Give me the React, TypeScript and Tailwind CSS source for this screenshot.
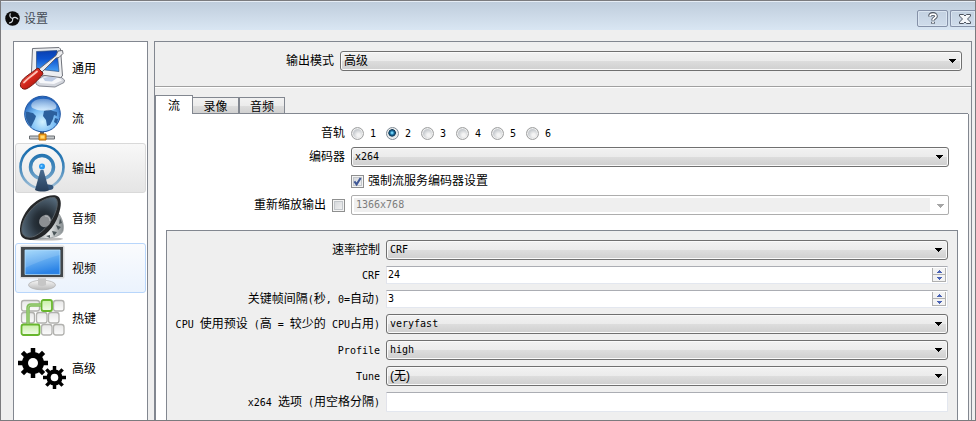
import React, { useState } from 'react';
import type { ReactNode } from 'react';

const CJK = "font-['Liberation_Sans','Noto_Sans_CJK_SC',sans-serif]";
const MONO = "font-['DejaVu_Sans_Mono','Noto_Sans_CJK_SC',monospace]";

/* Latin runs are set in a half-width face so they line up with the 12px Han glyphs. */
function Mixed({ text }: { text: string }) {
  const runs = text.match(/[\x20-\x7e]+|[^\x20-\x7e]+/g) ?? [];
  return (
    <>
      {runs.map((run, i) =>
        /^[\x20-\x7e]/.test(run) ? (
          <span key={i} className={`${MONO} text-[10px] whitespace-pre`}>{run}</span>
        ) : (
          <span key={i}>{run}</span>
        ),
      )}
    </>
  );
}

function Label({ htmlFor, children }: { htmlFor: string; children: string }) {
  return (
    <label htmlFor={htmlFor} className="h-[18px] justify-self-end whitespace-nowrap leading-[18px]">
      <Mixed text={children} />
    </label>
  );
}

function Combo({ id, value, han }: { id: string; value: string; han?: boolean }) {
  return (
    <div className="relative h-5">
      <select
        id={id}
        defaultValue={value}
        className={`block h-5 w-full appearance-none rounded-[3px] border border-[#707070] bg-[linear-gradient(#f2f2f2,#ebebeb_50%,#dddddd_50%,#cfcfcf)] pl-[3px] leading-[18px] text-black shadow-[inset_0_0_0_1px_#fafafa] outline-none ${han ? 'text-[12px]' : `${MONO} text-[10px]`}`}
      >
        <option>{value}</option>
      </select>
      <svg className="pointer-events-none absolute top-2 right-[6px]" width="7" height="4" viewBox="0 0 7 4" shapeRendering="crispEdges">
        <path d="M0 0h7v1H0zM1 1h5v1H1zM2 2h3v1H2zM3 3h1v1H3z" />
      </svg>
    </div>
  );
}

function DisabledCombo({ id, value }: { id: string; value: string }) {
  return (
    <div className="relative h-5 rounded-[2px] border border-[#adadad] bg-white py-[2px] pr-[18px] pl-[2px]">
      <select
        id={id}
        disabled
        defaultValue={value}
        className={`${MONO} block h-[14px] w-full appearance-none bg-[#efefef] pl-[2px] text-[10px] leading-[14px] text-[#7c7c7c] opacity-100`}
      >
        <option>{value}</option>
      </select>
      <svg className="pointer-events-none absolute top-2 right-1" width="7" height="4" viewBox="0 0 7 4" shapeRendering="crispEdges">
        <path fill="#a6a6a6" d="M0 0h7v1H0zM1 1h5v1H1zM2 2h3v1H2zM3 3h1v1H3z" />
      </svg>
    </div>
  );
}

const FIELD = 'border border-[#e3e7ef] border-t-[#abadb3] border-l-[#e2e3ea] bg-white';

function Spin({ id, initial }: { id: string; initial: number }) {
  const [value, setValue] = useState(initial);
  const step = 'flex w-full flex-1 items-center justify-center bg-[#f3f3f3]';
  return (
    <div className={`flex h-[18px] ${FIELD}`}>
      <input
        id={id}
        type="number"
        value={value}
        onChange={(e) => setValue(Number(e.target.value))}
        className={`${MONO} min-w-0 flex-1 [appearance:textfield] bg-transparent pl-px text-[10px] leading-4 outline-none [&::-webkit-inner-spin-button]:appearance-none`}
      />
      <div className="my-px mr-px flex w-[14px] flex-col border border-t-0 border-[#b0b0b0]">
        <button type="button" aria-label="+" onClick={() => setValue(value + 1)} className={`${step} border-b border-[#b0b0b0]`}>
          <svg width="5" height="3" viewBox="0 0 5 3" shapeRendering="crispEdges"><path fill="#4a63b5" d="M2 0h1v1H2zM1 1h3v1H1zM0 2h5v1H0z" /></svg>
        </button>
        <button type="button" aria-label="-" onClick={() => setValue(value - 1)} className={step}>
          <svg width="5" height="3" viewBox="0 0 5 3" shapeRendering="crispEdges"><path fill="#4a63b5" d="M0 0h5v1H0zM1 1h3v1H1zM2 2h1v1H2z" /></svg>
        </button>
      </div>
    </div>
  );
}

function Tick({ id, on }: { id: string; on?: boolean }) {
  return (
    <span className="relative block size-[13px] shrink-0">
      <input
        id={id}
        type="checkbox"
        defaultChecked={on}
        className="peer block size-[13px] appearance-none border border-[#8e8f8f] bg-[linear-gradient(135deg,#cfd2d6,#f6f6f6)] shadow-[inset_0_0_0_1px_#f4f4f4,inset_0_0_0_2px_#c3c7cb]"
      />
      <svg className="pointer-events-none absolute inset-0 hidden peer-checked:block" width="13" height="13" viewBox="0 0 13 13">
        <path d="M3.4 6.4 5.6 9.4 9.6 3" fill="none" stroke="#3f5795" strokeWidth="2" />
      </svg>
    </span>
  );
}

/* ---------- sidebar icons, 48px each ---------- */

function GeneralIcon() {
  return (
    <svg width="48" height="48" viewBox="0 0 48 48">
      <defs>
        <linearGradient id="gs" x1="0" y1="0" x2="0" y2="1"><stop offset="0" stopColor="#0b3fae" /><stop offset=".4" stopColor="#0c53cf" /><stop offset="1" stopColor="#45a0f5" /></linearGradient>
        <linearGradient id="gh" x1="0" y1="0" x2="1" y2="1"><stop offset="0" stopColor="#ee7467" /><stop offset=".5" stopColor="#d3261b" /><stop offset="1" stopColor="#8d120c" /></linearGradient>
      </defs>
      <path d="M18 36 27 31l14 .5 5.500 4.500-.5 2.500-9 4.500-16-1-3-2z" fill="#d4d7de" stroke="#888c96" />
      <path d="M20 36 28 32.500l12 .5 4 3.500-8 3.500-14-1z" fill="#f6f7fa" />
      <path d="m25 34 7-1.500 7 1.500-5 3.500-7-.5z" fill="#bccbe4" />
      <path d="M14.500 4.500 41 3.500l1.500 1.500 2 27-2 1.500-27-3.500-2-2z" fill="#eceef1" stroke="#70737b" />
      <path d="M18.500 7.500 39 6.500l2 21-22.500-2.500z" fill="url(#gs)" stroke="#31517f" strokeWidth=".7" />
      <path d="m21 25 17-13.500 2-4.500 4.500-.5.5 3-4 4-3 .5L24 28z" fill="#ececee" stroke="#5c5f66" strokeWidth=".9" />
      <path d="M3.500 37.500C6 33 13 29.500 19 24.500l1-.5 5 5-.5 1.500C20 36 14 42.500 8 45c-4 1-7.500-3-4.500-7.500z" fill="url(#gh)" stroke="#74140e" />
      <path d="M6 38.500c3-4 8-6.500 13-11" stroke="#ffc1b5" strokeWidth="1.800" fill="none" strokeLinecap="round" />
    </svg>
  );
}

function StreamIcon() {
  return (
    <svg width="48" height="48" viewBox="0 0 48 48">
      <defs>
        <radialGradient id="sg" cx=".5" cy=".72" r=".65"><stop offset="0" stopColor="#d2f1ff" /><stop offset=".55" stopColor="#78bcf5" /><stop offset="1" stopColor="#2465bd" /></radialGradient>
        <linearGradient id="st" x1="0" y1="0" x2="0" y2="1"><stop offset="0" stopColor="#fff" stopOpacity=".3" /><stop offset="1" stopColor="#fff" stopOpacity=".65" /></linearGradient>
      </defs>
      <path d="M24 37v6" stroke="#5b6066" strokeWidth="4" />
      <path d="M11.500 42h25v3h-25z" fill="#c5c8cb" stroke="#6a6e72" />
      <circle cx="24.500" cy="20" r="17.800" fill="url(#sg)" stroke="#1e55a3" />
      <path d="M8 18c2-1 5 1 7 1l3 3-1 3-2 4-2 4c-3-3-4-6-5-9zM26 17c3-2 6-2 9 0l4 1v4l-3-1-1 4-3 6-3 1-1-6-3-4zM37 24l3 1-1 5-3-2z" fill="#2b5f9d" />
      <path d="M15 8c4-4 15-4 19-1 4 2 6 6 3 8-6 2-16 2-20 0-4-1-5-4-2-7z" fill="url(#st)" />
      <path d="M21 40h7v6h-7z" fill="#f9a21b" stroke="#b66b06" />
      <path d="M22.500 41.500h4v3h-4z" fill="#ffdc73" />
    </svg>
  );
}

function OutputIcon() {
  return (
    <svg width="48" height="48" viewBox="0 0 48 48">
      <defs>
        <linearGradient id="og" gradientUnits="userSpaceOnUse" x1="0" y1="2" x2="0" y2="46"><stop offset="0" stopColor="#1068ac" /><stop offset=".5" stopColor="#4488bb" /><stop offset="1" stopColor="#a8c4da" /></linearGradient>
        <linearGradient id="oc" x1="0" y1="0" x2="0" y2="1"><stop offset="0" stopColor="#4a6d91" /><stop offset="1" stopColor="#263d59" /></linearGradient>
      </defs>
      <circle cx="24" cy="23" r="21.500" fill="none" stroke="url(#og)" strokeWidth="2.600" />
      <circle cx="24" cy="23" r="11.500" fill="none" stroke="url(#og)" strokeWidth="3.500" />
      <path d="m27 40 7 1c3 2 1 5-2 5l-6 1z" fill="#33547a" />
      <path d="M22.500 26h3L31 46c-3 2-10 2-14 0z" fill="url(#oc)" />
      <circle cx="24" cy="22.500" r="3" fill="#2a9af0" />
      <circle cx="23.500" cy="22" r="1" fill="#8bd0ff" />
    </svg>
  );
}

function AudioIcon() {
  return (
    <svg width="48" height="48" viewBox="0 0 48 48">
      <defs>
        <radialGradient id="ag" cx=".62" cy=".62" r=".7"><stop offset="0" stopColor="#181d22" /><stop offset=".4" stopColor="#28323b" /><stop offset="1" stopColor="#5a7082" /></radialGradient>
        <linearGradient id="ab" x1="0" y1="0" x2="1" y2="0"><stop offset="0" stopColor="#60686b" /><stop offset=".5" stopColor="#eef0f0" /><stop offset="1" stopColor="#868d90" /></linearGradient>
      </defs>
      <ellipse cx="28" cy="45" rx="17" ry="1.600" fill="#bcbcbc" />
      <path d="M41 20c4 6 5 12 4 17-2 6-14 8-30 8z" fill="url(#ab)" stroke="#8b9194" strokeWidth=".7" />
      <path d="m38 31 5 2-3 3zM34 37l5 1-3 4zM42 24l2 5-3 1zM28 42l4-1v3z" fill="#4b5559" />
      <path d="M38 1.500c5 1 6 8 3.500 16C39 28 31 41 19 45 12 47 4 46 2.500 40 1 33 3 24 10 15 17 6 30 0 38 1.500z" fill="#242628" />
      <path d="M36 3.500c4 .5 4 7 2 13C35 26 27 37 17 42 11 44.500 5 43 4 38c-1-6 2-14 8-21C18 9 30 2.500 36 3.500z" fill="url(#ag)" stroke="#575f65" />
      <ellipse cx="27" cy="27" rx="5.500" ry="6.500" transform="rotate(38 27 27)" fill="#8c8f92" />
      <path d="M27 22c3 0 5 2 5 5" stroke="#b7babd" fill="none" />
    </svg>
  );
}

function VideoIcon() {
  return (
    <svg width="48" height="48" viewBox="0 0 48 48">
      <defs>
        <linearGradient id="vg" x1="0" y1="0" x2=".3" y2="1"><stop offset="0" stopColor="#9bd5fb" /><stop offset="1" stopColor="#2b83e6" /></linearGradient>
        <linearGradient id="vb" x1="0" y1="0" x2="0" y2="1"><stop offset="0" stopColor="#f7f7f7" /><stop offset="1" stopColor="#b9b9b9" /></linearGradient>
      </defs>
      <ellipse cx="24" cy="41" rx="13.500" ry="4.800" fill="url(#vb)" stroke="#b4b4b4" strokeWidth=".8" />
      <path d="M20 33h8v8c-2 1.500-6 1.500-8 0z" fill="#c6c6c6" />
      <rect x="2" y="1.500" width="44.500" height="33" rx="1.500" fill="#d9dadb" />
      <rect x="3" y="3" width="42" height="30" fill="#42474b" />
      <path d="M7 6h35v24.500H7z" fill="url(#vg)" stroke="#a9dbff" strokeWidth=".8" />
      <path d="M7 6h35v5C29 14 15 20 7 24z" fill="#fff" opacity=".12" />
    </svg>
  );
}

function HotkeyIcon() {
  const keys = [
    [3.5, 6.5, 18], [35.5, 6.5, 10.5],
    [3.5, 18.5, 13], [18.5, 18.5, 10.5], [30.5, 18.5, 10.5],
    [23.5, 30.5, 10.5], [35.5, 30.5, 10.5],
  ];
  return (
    <svg width="48" height="48" viewBox="0 0 48 48">
      <defs>
        <linearGradient id="kg" x1="0" y1="0" x2="0" y2="1"><stop offset="0" stopColor="#e7e7e7" /><stop offset="1" stopColor="#fcfcfc" /></linearGradient>
        <linearGradient id="kn" x1="0" y1="0" x2="0" y2="1"><stop offset="0" stopColor="#c7efa6" /><stop offset="1" stopColor="#f3fcea" /></linearGradient>
      </defs>
      {keys.map(([x, y, w]) => (
        <rect key={`${x}-${y}`} x={x} y={y} width={w} height="10.500" rx="2.500" fill="url(#kg)" stroke="#b1b1ae" strokeWidth="1.300" />
      ))}
      <rect x="3.500" y="30.500" width="18" height="10.500" rx="2" fill="url(#kn)" stroke="#68b62e" strokeWidth="1.800" />
      <rect x="23.500" y="6" width="10.500" height="11" rx="2" fill="url(#kn)" stroke="#68b62e" strokeWidth="1.800" />
      <path d="M10 30V14q0-3 3-3h10" fill="none" stroke="#82be5b" strokeWidth="3.500" />
      <path d="M10 30V14q0-3 3-3h10" fill="none" stroke="#a5d486" strokeWidth="1" />
    </svg>
  );
}

function Gear({ cx, cy, r, body, hole, tooth }: { cx: number; cy: number; r: number; body: number; hole: number; tooth: number }) {
  return (
    <g transform={`translate(${cx} ${cy})`}>
      {[0, 45, 90, 135].map((a) => (
        <rect key={a} x={-tooth / 2} y={-r} width={tooth} height={r * 2} transform={`rotate(${a})`} />
      ))}
      <circle r={body} />
      <circle r={hole} fill="#fff" />
    </g>
  );
}

function AdvancedIcon() {
  return (
    <svg width="48" height="48" viewBox="0 0 48 48">
      <Gear cx={15} cy={19} r={15} body={11} hole={5} tooth={4.5} />
      <Gear cx={36.5} cy={33.5} r={11.5} body={8} hole={3.8} tooth={3.5} />
    </svg>
  );
}

const NAV: { name: string; icon: ReactNode; look: string }[] = [
  { name: '通用', icon: <GeneralIcon />, look: 'border-transparent' },
  { name: '流', icon: <StreamIcon />, look: 'border-transparent' },
  { name: '输出', icon: <OutputIcon />, look: 'border-[#d9d9d9] bg-linear-to-b from-[#f8f8f8] to-[#e5e5e5]' },
  { name: '音频', icon: <AudioIcon />, look: 'border-transparent' },
  { name: '视频', icon: <VideoIcon />, look: 'border-[#b8d6fb] bg-linear-to-b from-[#fafbfd] to-[#ebf3fd]' },
  { name: '热键', icon: <HotkeyIcon />, look: 'border-transparent' },
  { name: '高级', icon: <AdvancedIcon />, look: 'border-transparent' },
];

function TitleBar() {
  const btn = 'flex h-[17px] items-center justify-center border border-[#8591a8] bg-linear-to-b from-[#c3d1e1] to-[#cfdceb] shadow-[inset_0_0_0_1px_#dae5f1]';
  return (
    <header className="flex h-[29px] shrink-0 items-center border-t border-[#e6edf5] bg-linear-to-b from-[#bfcddc] to-[#d9e6f3] pt-[5px] pl-1">
      <svg width="15" height="15" viewBox="0 0 30 30" aria-hidden="true">
        <circle cx="15" cy="15" r="14.500" fill="#0b0b0b" />
        {[0, 120, 240].map((a) => (
          <path key={a} d="M10.500 5.500C8.500 10 10.500 14 15 15" fill="none" stroke="#d4dae0" strokeWidth="2.400" strokeLinecap="round" transform={`rotate(${a} 15 15)`} />
        ))}
      </svg>
      <h1 className="ml-1 flex-1 text-[12px] leading-4 text-[#454c55]">设置</h1>
      <button type="button" aria-label="帮助" className={`${btn} mr-[2px] w-[31px] rounded-[2px]`}>
        <svg width="10" height="13" viewBox="0 0 10 13">
          <path d="M2 4.500C2 1 8 1 8 4.200 8 6.200 5 6 5 8.500M5 9.700v2" fill="none" stroke="#4e5561" strokeWidth="3.600" />
          <path d="M2 4.200C2 1.300 8 1.300 8 4.200 8 6.200 5 6 5 8.200M5 9.700v1.500" fill="none" stroke="#fff" strokeWidth="1.700" />
        </svg>
      </button>
      <button type="button" aria-label="关闭" className={`${btn} w-[25px] rounded-l-[2px] border-r-0 pl-1`}>
        <svg width="12" height="10" viewBox="0 0 12 10">
          <path d="M.5.5h4L6 2 7.500.5h4v1.500L8.500 5l3 3v1.500h-4L6 8 4.500 9.500h-4V8l3-3-3-3z" fill="#f5f7fa" stroke="#4e5561" />
        </svg>
      </button>
    </header>
  );
}

function Sidebar() {
  return (
    <nav className="w-[135px] shrink-0 border border-b-0 border-[#828790] bg-white px-px pt-px">
      {NAV.map(({ name, icon, look }) => (
        <button key={name} type="button" className={`flex h-[50px] w-full items-center gap-[6px] rounded-[3px] border pl-[2px] text-left text-[12px] ${look}`}>
          {icon}
          <span className="pt-[2px]">{name}</span>
        </button>
      ))}
    </nav>
  );
}

function Tracks() {
  const [track, setTrack] = useState(2);
  return (
    <fieldset className="flex h-[18px] items-center" aria-label="音轨">
      {[1, 2, 3, 4, 5, 6].map((n) => (
        <label key={n} className={`${MONO} flex w-[35px] items-center gap-[6px] text-[10px]`}>
          <input
            type="radio"
            name="track"
            id={`track-${n}`}
            checked={track === n}
            onChange={() => setTrack(n)}
            className="size-[13px] appearance-none rounded-full border border-[#a0a1a1] bg-[radial-gradient(circle_at_60%_65%,#f4f4f4_15%,#c8ccd0_55%)] shadow-[inset_0_0_0_1px_#f0f0f0] checked:border-[#7f8b95] checked:bg-[radial-gradient(circle_at_46%_44%,#6fd3f7_8%,#176b9e_24%,#0c3450_40%,#dfe6ea_48%)]"
          />
          {n}
        </label>
      ))}
    </fieldset>
  );
}

function EncoderSettings() {
  return (
    <section className="mx-[10px] mt-[15px] grid flex-1 grid-cols-[213px_1fr] content-start items-center gap-[6px] border border-b-0 border-[#828790] bg-[#efefef] pt-[9px] pr-[9px]">
      <Label htmlFor="rate">速率控制</Label>
      <Combo id="rate" value="CRF" />
      <Label htmlFor="crf">CRF</Label>
      <Spin id="crf" initial={24} />
      <Label htmlFor="keyint">关键帧间隔(秒, 0=自动)</Label>
      <Spin id="keyint" initial={3} />
      <Label htmlFor="preset">CPU 使用预设 (高 = 较少的 CPU占用)</Label>
      <Combo id="preset" value="veryfast" />
      <Label htmlFor="profile">Profile</Label>
      <Combo id="profile" value="high" />
      <Label htmlFor="tune">Tune</Label>
      <Combo id="tune" value="(无)" han />
      <Label htmlFor="x264opts">x264 选项 (用空格分隔)</Label>
      <input id="x264opts" type="text" className={`${MONO} h-5 w-full rounded-[1px] px-px text-[10px] outline-none ${FIELD}`} />
    </section>
  );
}

export default function App() {
  const tab = 'border-[#828790] text-[12px]';
  const idle = 'h-[18px] w-[46px] bg-[linear-gradient(#f2f2f2,#ebebeb_50%,#dddddd_50%,#cfcfcf)] leading-[18px]';
  return (
    <div className={`${CJK} flex h-screen flex-col overflow-hidden border border-[#7b7b7e] bg-[#efefef] text-[12px] text-black`}>
      <TitleBar />
      <div className="flex min-h-0 flex-1 gap-[6px] pt-[11px] pr-[3px] pl-3">
        <Sidebar />
        <main className="flex min-w-0 flex-1 flex-col border border-b-0 border-[#828790]">
          <div className="grid grid-cols-[179px_1fr] items-center gap-[6px] pt-[9px] pr-[9px] pb-[15px]">
            <Label htmlFor="mode">输出模式</Label>
            <Combo id="mode" value="高级" han />
          </div>
          <hr className="h-[2px] border-t border-b border-t-[#a0a0a0] border-b-white" />
          <div role="tablist" className="mt-[7px] -mb-px flex items-end">
            <button type="button" role="tab" aria-selected="true" className={`${tab} h-5 w-[38px] border border-b-0 bg-white leading-5`}>流</button>
            <button type="button" role="tab" aria-selected="false" className={`${tab} ${idle} border border-l-0`}>录像</button>
            <button type="button" role="tab" aria-selected="false" className={`${tab} ${idle} border`}>音频</button>
          </div>
          <div role="tabpanel" className="mr-[2px] flex flex-1 flex-col border border-t-0 border-b-0 border-[#828790] bg-white">
            <div className="-mt-px ml-[36px] h-px bg-[#828790]" />
            <div className="grid grid-cols-[189px_1fr] items-center gap-x-[6px] gap-y-[5px] pt-[10px] pr-[19px]">
              <Label htmlFor="track-2">音轨</Label>
              <Tracks />
              <Label htmlFor="encoder">编码器</Label>
              <Combo id="encoder" value="x264" />
              <div className="col-start-2 flex h-[18px] items-center gap-1">
                <Tick id="enforce" on />
                <label htmlFor="enforce">强制流服务编码器设置</label>
              </div>
              <div className="flex h-[18px] items-center justify-end gap-[6px]">
                <label htmlFor="rescale">重新缩放输出</label>
                <Tick id="rescale" />
              </div>
              <DisabledCombo id="resolution" value="1366x768" />
            </div>
            <EncoderSettings />
          </div>
        </main>
      </div>
    </div>
  );
}
